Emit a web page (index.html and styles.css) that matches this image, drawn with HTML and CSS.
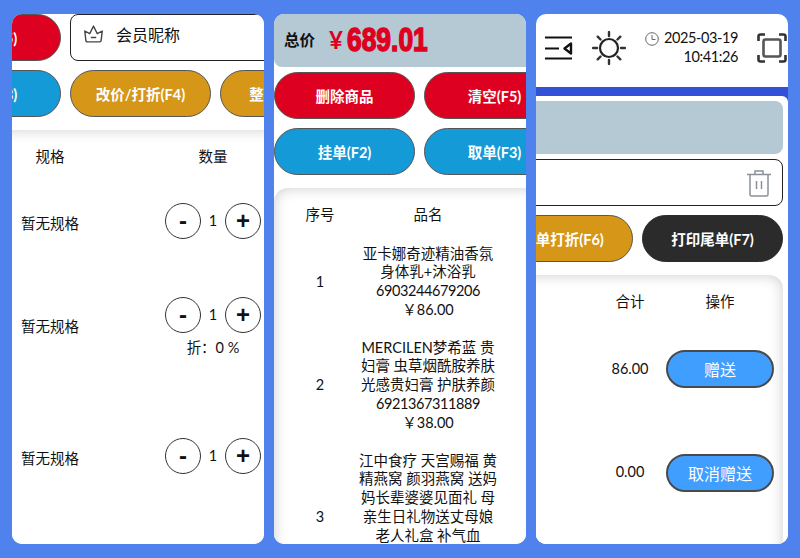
FILE: index.html
```html
<!DOCTYPE html>
<html lang="zh-CN">
<head>
    <title>收银台</title>
    <meta charset="UTF-8" />
    <link rel="stylesheet" href="styles.css">
</head>
<body>
    <!-- left view: member and quantity columns -->
    <section class="panel">
        <div class="btn-row shift-left">
            <button class="btn red">清空(F5)</button>
            <div class="member-box">
                <svg class="crown" viewBox="2 1 18 16.500" width="21" height="18">
                    <path d="M3 6.500 L7.500 9 L11 2 L14.500 9 L19 6.500 L18 15 Q18 16.500 16.500 16.500 L5.500 16.500 Q4 16.500 4 15 Z" fill="none" stroke="#444" stroke-width="1.300" stroke-linejoin="round"/>
                    <path d="M8.500 12.500 H13.500" stroke="#444" stroke-width="1.300"/>
                </svg>
                <span class="member-name">会员昵称</span>
            </div>
        </div>
        <div class="btn-row shift-left">
            <button class="btn blue">取单(F3)</button>
            <button class="btn gold">改价/打折(F4)</button>
            <button class="btn gold">整单打折(F6)</button>
        </div>
        <div class="card card-left">
            <div class="spec-grid head">
                <div>规格</div>
                <div>数量</div>
            </div>
            <div class="spec-grid lines-4">
                <div>暂无规格</div>
                <div class="qty">
                    <div class="stepper"><span class="step">-</span><span class="count">1</span><span class="step">+</span></div>
                </div>
            </div>
            <div class="spec-grid lines-5">
                <div>暂无规格</div>
                <div class="qty">
                    <div class="stepper"><span class="step">-</span><span class="count">1</span><span class="step">+</span></div>
                    <div>折：0 %</div>
                </div>
            </div>
            <div class="spec-grid lines-7">
                <div>暂无规格</div>
                <div class="qty">
                    <div class="stepper"><span class="step">-</span><span class="count">1</span><span class="step">+</span></div>
                </div>
            </div>
        </div>
    </section>

    <!-- middle view: totals and goods names -->
    <section class="panel">
        <div class="total-bar bar-middle">
            <span class="total-label">总价</span>
            <span class="total-yen">¥</span>
            <span class="total-value">689.01</span>
        </div>
        <div class="btn-row">
            <button class="btn red">删除商品</button>
            <button class="btn red">清空(F5)</button>
        </div>
        <div class="btn-row">
            <button class="btn blue">挂单(F2)</button>
            <button class="btn blue">取单(F3)</button>
        </div>
        <div class="card card-middle">
            <div class="goods-grid head">
                <div>序号</div>
                <div>品名</div>
            </div>
            <div class="goods-grid lines-4">
                <div>1</div>
                <div>亚卡娜奇迹精油香氛<br>身体乳+沐浴乳<br><span class="num">6903244679206</span><br>￥86.00</div>
            </div>
            <div class="goods-grid lines-5">
                <div>2</div>
                <div>MERCILEN梦希蓝 贵<br>妇膏 虫草烟酰胺养肤<br>光感贵妇膏 护肤养颜<br><span class="num">6921367311889</span><br>￥38.00</div>
            </div>
            <div class="goods-grid lines-7">
                <div>3</div>
                <div class="name-top">江中食疗 天宫赐福 黄<br>精燕窝 颜羽燕窝 送妈<br>妈长辈婆婆见面礼 母<br>亲生日礼物送丈母娘<br>老人礼盒 补气血</div>
            </div>
        </div>
    </section>

    <!-- right view: top bar, actions and totals -->
    <section class="panel">
        <header class="topbar">
            <svg viewBox="0 0 28 24" width="28" height="24">
                <path d="M0 1.500 H27 M0 12.500 H14 M0 22.500 H27" stroke="#111" stroke-width="2.200" fill="none"/>
                <path d="M26 7.500 V17.500 L19.500 12.500 Z" fill="none" stroke="#111" stroke-width="2.400" stroke-linejoin="round"/>
            </svg>
            <svg viewBox="0 0 34 34" width="34" height="34">
                <circle cx="17" cy="17" r="9" fill="none" stroke="#222" stroke-width="2.200"/>
                <path d="M17 1 V5 M17 29 V33 M1 17 H5 M29 17 H33 M5.700 5.700 L8.500 8.500 M25.500 25.500 L28.300 28.300 M5.700 28.300 L8.500 25.500 M25.500 8.500 L28.300 5.700" stroke="#333" stroke-width="2.400" stroke-linecap="round"/>
            </svg>
            <div class="clock">
                <div class="clock-date">
                    <svg class="clock-icon" viewBox="0 0 14 14" width="14" height="14">
                        <circle cx="7" cy="7" r="6.300" fill="none" stroke="#666" stroke-width="1"/>
                        <path d="M7 3 V7.500 H10.500" fill="none" stroke="#666" stroke-width="1"/>
                    </svg>
                    <span>2025-03-19</span>
                </div>
                <div>10:41:26</div>
            </div>
            <svg viewBox="0 0 30 30" width="30" height="30">
                <path d="M1.500 8 V3.500 Q1.500 1.500 3.500 1.500 H8 M22 1.500 H26.500 Q28.500 1.500 28.500 3.500 V8 M28.500 22 V26.500 Q28.500 28.500 26.500 28.500 H22 M8 28.500 H3.500 Q1.500 28.500 1.500 26.500 V22" fill="none" stroke="#333" stroke-width="2.600"/>
                <rect x="6.500" y="6.500" width="17" height="17" rx="2" fill="none" stroke="#555" stroke-width="2.600"/>
            </svg>
        </header>
        <div class="band">
            <div class="band-body">
                <div class="total-bar bar-right"></div>
                <div class="btn-row end">
                    <div class="member-box">
                        <svg viewBox="0 0 26 28" width="26" height="28">
                            <path d="M1 5.500 H25 M9 5.500 V2 H17 V5.500 M4 5.500 V25.500 Q4 27 5.500 27 H20.500 Q22 27 22 25.500 V5.500 M10.500 12 V20 M15.500 12 V20" fill="none" stroke="#8a9199" stroke-width="1.500"/>
                        </svg>
                    </div>
                </div>
                <div class="btn-row end">
                    <button class="btn gold">整单打折(F6)</button>
                    <button class="btn dark">打印尾单(F7)</button>
                </div>
                <div class="card card-right">
                    <div class="sum-grid head">
                        <div>合计</div>
                        <div>操作</div>
                    </div>
                    <div class="sum-grid lines-4">
                        <div>86.00</div>
                        <button class="gift">赠送</button>
                    </div>
                    <div class="sum-grid lines-5">
                        <div>0.00</div>
                        <button class="gift">取消赠送</button>
                    </div>
                </div>
            </div>
        </div>
    </section>
</body>
</html>
```

FILE: styles.css
```css
body {
    margin: 0;
    height: 558px;
    box-sizing: border-box;
    padding: 14px 12px;
    display: flex;
    gap: 10px;
    overflow: hidden;
    background: #5082ee;
    font-family: "Lato", "Noto Sans CJK SC", sans-serif;
    font-size: 14.5px;
    line-height: 18.75px;
    color: #111;
}

.panel {
    width: 252px;
    height: 530px;
    flex: none;
    display: flex;
    flex-direction: column;
    overflow: hidden;
    background: #fff;
    border-radius: 10px;
}

.btn-row {
    display: flex;
    gap: 9px;
    flex: none;
    margin-bottom: 9px;
}

.shift-left {
    margin-left: -92px;
}

.end {
    justify-content: flex-end;
    margin-right: 5px;
}

.btn {
    width: 141px;
    height: 47px;
    flex: none;
    padding: 0;
    border: 1px solid #555;
    border-radius: 24px;
    font-family: inherit;
    font-size: 14.5px;
    font-weight: 700;
    color: #fff;
}

.red {
    background: #de0020;
}

.blue {
    background: #149ad6;
}

.gold {
    background: #d69617;
}

.dark {
    background: #2b2b2b;
    border-color: #2b2b2b;
}

.member-box {
    width: 330px;
    height: 47px;
    flex: none;
    box-sizing: border-box;
    display: flex;
    align-items: center;
    gap: 12px;
    padding: 0 10px 0 12px;
    border: 1px solid #222;
    border-radius: 8px;
    background: #fff;
    font-size: 16px;
}

.end .member-box {
    justify-content: flex-end;
}

.crown {
    margin-bottom: 8px;
}

.member-name {
    margin-bottom: 4px;
}

.total-bar {
    height: 53px;
    flex: none;
    display: flex;
    align-items: center;
    border-radius: 8px;
    background: #b5c9d4;
}

.bar-middle {
    margin: 0 -20px 5px 0;
    padding-left: 10px;
}

.bar-right {
    margin: 0 5px 5px -20px;
}

.total-label {
    font-size: 15.5px;
    font-weight: 700;
    margin-right: 14px;
}

.total-yen {
    font-size: 24px;
    font-weight: 700;
    color: #de0020;
    margin-right: 4px;
}

.total-value {
    display: inline-block;
    font-family: "Liberation Sans", sans-serif;
    font-size: 33px;
    font-weight: 700;
    color: #de0020;
    -webkit-text-stroke: 1.5px #de0020;
    transform: scaleX(0.8);
    transform-origin: left center;
}

.card {
    flex: 1;
    min-height: 0;
    overflow: hidden;
    margin-top: 4px;
    background: #fff;
    border-radius: 14px;
    box-shadow: inset 0 0 14px rgba(0, 0, 0, 0.2);
    text-align: center;
}

.card-left {
    margin: 4px -20px -20px -20px;
    padding-left: 20px;
}

.card-middle {
    margin: 4px -20px -20px 0;
}

.card-right {
    margin: 4px 5px -20px -20px;
}

.spec-grid,
.goods-grid,
.sum-grid {
    display: grid;
    align-items: center;
}

.head {
    height: 47px;
    box-sizing: border-box;
    padding-top: 8px;
}

.lines-4 {
    height: 94px;
}

.lines-5 {
    height: 113px;
}

.lines-7 {
    height: 150px;
}

.spec-grid {
    grid-template-columns: 76px 126px;
    column-gap: 62px;
}

.goods-grid {
    grid-template-columns: 92px 124px;
    white-space: nowrap;
}

.goods-grid > div {
    justify-self: center;
}

.name-top {
    padding-bottom: 37px;
}

.num {
    letter-spacing: -0.4px;
}

.sum-grid {
    grid-template-columns: 72px 108px;
    justify-content: end;
    padding-right: 9px;
}

.qty {
    display: flex;
    flex-direction: column;
    align-items: center;
}

.stepper {
    display: flex;
    align-items: center;
    gap: 12px;
    height: 36px;
    margin-bottom: 6px;
}

.stepper .count {
    width: 0;
    display: flex;
    justify-content: center;
}

.step {
    width: 36px;
    height: 36px;
    box-sizing: border-box;
    display: flex;
    align-items: center;
    justify-content: center;
    border: 1px solid #333;
    border-radius: 50%;
    font-family: "Liberation Sans", sans-serif;
    font-size: 24px;
    font-weight: 700;
}

.gift {
    width: 108px;
    height: 38px;
    padding: 0;
    border: 2px solid #4a4a4a;
    border-radius: 19px;
    background: #409eff;
    font-family: inherit;
    font-size: 16px;
    color: #fff;
}

.topbar {
    height: 73px;
    flex: none;
    box-sizing: border-box;
    display: flex;
    align-items: center;
    gap: 19px;
    padding: 0 0 5px 9px;
    white-space: nowrap;
}

.clock {
    width: 93px;
    flex: none;
    text-align: right;
    letter-spacing: -0.4px;
}

.clock-date {
    display: flex;
    align-items: center;
    justify-content: flex-end;
    gap: 5px;
}

.clock-icon {
    flex: none;
}

.band {
    flex: 1;
    min-height: 0;
    display: flex;
    padding-top: 9px;
    background: linear-gradient(#3350d8, #3350d8) top left / 100% 20px no-repeat;
}

.band-body {
    flex: 1;
    min-width: 0;
    display: flex;
    flex-direction: column;
    padding-top: 5px;
    background: #fff;
    border-radius: 0 6px 0 0;
}
```
